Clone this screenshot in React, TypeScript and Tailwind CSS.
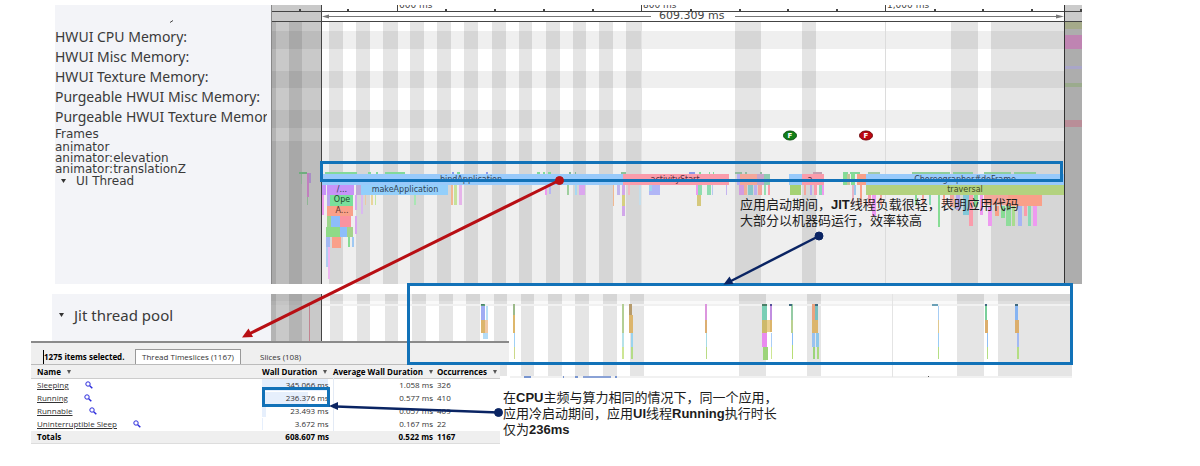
import React from "react";

type Bar = [x: number, y: number, w: number, h: number, fill: string];

const UPPER_STRIPES: [number, number][] = [
  [329, 14], [356, 14], [383, 15], [410, 14], [437, 14], [464, 14], [492, 14], [519, 13],
  [546, 14], [573, 13], [599, 14], [626, 15], [735, 26], [802, 14], [951, 27], [991, 73],
  [289, 13], [271, 5],
];
const LOWER_STRIPES: [number, number][] = [
  [330, 13], [357, 13], [385, 13], [412, 14], [439, 14], [466, 14], [494, 13], [521, 13],
  [548, 14], [575, 14], [603, 14], [630, 14], [739, 27], [807, 14], [957, 27], [998, 74],
  [289, 13], [271, 5],
];
const ROWS: [number, number][] = [[31, 18], [71, 17], [110, 18], [141, 143]];
const MINOR_TICKS = [299, 347, 445, 494, 543, 592, 690, 739, 787, 836, 934, 982, 1031, 1080];
const MAJOR_TICKS: [number, string][] = [[397, "600 ms"], [641, "800 ms"], [885, "1,000 ms"]];

const BLUE = "#98cafb";
const PINK = "#fa9cab";
const GREEN = "#86dc94";
const PURPLE = "#c793f8";
const ORANGE = "#f9a089";
const OLIVE = "#b3d27f";
const MAGENTA = "#ee9af0";

const SLICES: Bar[] = [
  // top level
  [322, 174, 301, 11, BLUE], [623, 174, 106, 11, PINK], [737, 174, 20, 11, "#f4a79b"],
  [757, 174, 7, 11, "#c9a5c9"], [764, 174, 6, 11, "#8fcbb2"], [737, 174, 3, 11, "#b8aef0"],
  [789, 174, 13, 11, BLUE], [802, 174, 22, 11, PINK], [843, 174, 4, 11, GREEN],
  [847, 174, 3, 11, "#c6c39a"], [851, 174, 4, 11, GREEN], [857, 174, 9, 11, ORANGE],
  [866, 174, 198, 11, BLUE],
  // second level
  [321, 185, 5, 10, PURPLE], [327, 185, 27, 10, PURPLE], [356, 185, 5, 10, "#c0a9d8"],
  [361, 185, 87, 10, "#93cffb"], [866, 185, 198, 10, OLIVE],
  [451, 185, 2, 20, "#f1b891"], [454, 185, 3, 20, "#c7e29a"], [459, 185, 3, 20, "#e6b4ea"],
  [371, 195, 2, 10, "#e9d59c"], [375, 195, 1, 10, "#c2e8a0"], [414, 195, 2, 10, "#a9e6b4"],
  [545, 186, 2, 9, MAGENTA], [549, 186, 2, 8, "#b7b5f3"], [567, 185, 2, 10, "#9fcf9f"],
  [575, 185, 2, 10, "#a6d9f2"], [579, 185, 6, 10, "#dba6ee"], [613, 185, 1, 21, "#f1b891"],
  [617, 185, 3, 10, "#c2b5ee"], [622, 185, 3, 31, "#d2a7ea"], [622, 195, 3, 11, "#d6cf80"],
  [628, 185, 2, 10, "#f2b9c3"], [639, 185, 2, 20, "#c4ddea"], [649, 185, 11, 10, "#b1b6f6"],
  [649, 185, 3, 6, "#9fd4ee"], [696, 185, 2, 10, MAGENTA], [698, 185, 4, 10, "#8edcb0"],
  [697, 195, 4, 11, "#d5c87c"], [707, 185, 4, 10, "#8edcb0"], [712, 185, 1, 10, "#b7c8f2"],
  [726, 185, 1, 10, "#c5b4f0"], [739, 185, 5, 10, "#d49ce0"], [744, 185, 3, 10, "#f0b09a"],
  [748, 185, 5, 10, "#86c7c9"], [754, 185, 3, 10, "#bcb1ef"], [758, 185, 4, 10, "#f5a49c"],
  [764, 185, 2, 10, "#95dfb0"], [768, 185, 2, 10, PINK], [790, 185, 11, 10, "#a5d273"],
  [804, 185, 2, 10, "#f4a79b"], [810, 185, 2, 10, "#b7a9ee"], [814, 185, 3, 10, PINK],
  [819, 185, 3, 10, "#8adbb5"], [822, 185, 2, 10, MAGENTA], [852, 185, 2, 20, "#e8b5c6"],
  [854, 185, 2, 10, "#9fc9ed"], [860, 185, 2, 20, ORANGE],
  // nested below makeApplication
  [322, 195, 2, 20, MAGENTA], [328, 195, 2, 21, "#a8cba5"], [330, 195, 23, 11, "#78df9b"],
  [327, 206, 26, 10, ORANGE], [327, 195, 3, 11, "#b4a7ec"], [355, 195, 2, 15, "#d8a7f0"],
  [361, 195, 2, 19, "#d9b9f1"], [365, 195, 1, 10, "#eac8a5"],
  [327, 216, 4, 11, "#9cd68b"], [331, 216, 9, 11, "#8dbdfa"], [340, 216, 11, 11, "#fb93a0"],
  [326, 227, 14, 10, "#8edb87"], [340, 227, 7, 10, "#8dbdfa"], [347, 227, 6, 10, "#a5d38b"],
  [326, 237, 4, 10, "#a3b8f3"], [332, 237, 9, 11, ORANGE], [348, 237, 2, 10, GREEN],
  [352, 237, 2, 10, "#9fc9f3"], [326, 247, 2, 20, "#b1cdf1"], [328, 247, 2, 32, "#edb6ef"],
  [355, 216, 2, 18, "#d8a7f0"],
  // nested below traversal
  [1008, 195, 34, 11, ORANGE], [984, 195, 24, 10, "#f4a79b"],
  [868, 195, 3, 11, PINK], [872, 195, 4, 21, MAGENTA], [880, 195, 2, 10, "#f4a79b"],
  [915, 195, 2, 10, GREEN], [922, 195, 2, 10, "#f4a79b"], [929, 195, 2, 10, "#8adbb5"],
  [938, 195, 2, 32, GREEN], [943, 195, 2, 10, ORANGE], [950, 195, 4, 12, "#f4a79b"],
  [956, 195, 4, 15, "#b7a9ee"], [963, 195, 6, 20, "#83c8d8"], [969, 195, 4, 31, PINK],
  [974, 195, 4, 12, GREEN], [980, 195, 3, 20, MAGENTA], [988, 206, 4, 20, MAGENTA],
  [995, 206, 4, 10, ORANGE], [1001, 206, 4, 12, GREEN], [1006, 206, 5, 20, "#8fdc9b"],
  [1012, 206, 3, 20, "#a9dc8f"], [1018, 206, 4, 20, "#a8b4f4"], [1024, 206, 3, 10, PINK],
  [1028, 206, 3, 20, "#8adbb5"], [1033, 206, 4, 20, MAGENTA],
];

const STATES: Bar[] = [
  [325, 172, 32, 2, "#83d99a"], [368, 172, 3, 2, "#83d99a"], [376, 172, 2, 2, "#83d99a"],
  [385, 172, 20, 2, "#83d99a"], [452, 172, 2, 2, "#8b9bea"], [457, 172, 3, 2, "#83d99a"],
  [486, 172, 2, 2, "#8b9bea"], [537, 172, 3, 2, "#83d99a"], [543, 172, 2, 2, "#83d99a"],
  [548, 172, 3, 2, "#83d99a"], [569, 172, 2, 2, "#83b99a"], [575, 172, 1, 2, "#83b99a"],
  [621, 172, 5, 2, "#8cc39a"], [689, 172, 6, 2, "#8b9bea"], [699, 172, 2, 2, "#83d99a"],
  [709, 172, 1, 2, "#83d99a"], [713, 172, 1, 2, "#83d99a"], [735, 172, 7, 2, "#91bba0"],
  [745, 172, 2, 2, "#91bba0"], [760, 172, 2, 2, "#91bba0"], [813, 172, 9, 2, "#c39fb0"],
  [843, 172, 5, 2, "#83d99a"], [850, 172, 10, 2, "#83d99a"], [868, 172, 12, 2, "#a4c9a8"],
  [912, 172, 38, 2, "#8fce9c"], [953, 172, 20, 2, "#8fce9c"], [984, 172, 27, 2, "#8fce9c"],
  [1014, 172, 22, 2, "#8fce9c"], [299, 172, 8, 2, "#6fae7e"], [301, 174, 1, 10, "#8fb094"],
  [307, 173, 2, 24, "#c07fbd"], [309, 173, 2, 10, "#a98fc6"], [307, 197, 1, 8, "#8fb594"],
];

const EDGE: Bar[] = [
  [1065, 22, 17, 7, "#a5aa8a"], [1065, 35, 17, 14, "#bf84b2"], [1065, 66, 17, 3, "#a9a6c8"],
  [1065, 83, 17, 4, "#9bab8d"], [1065, 120, 17, 7, "#b98e98"],
];

const JIT: Bar[] = [
  [481, 304, 4, 2, "#5ea27d"], [481, 306, 4, 14, "#a0acf3"], [481, 320, 4, 13, "#dcb56c"],
  [485, 320, 3, 13, "#f0c9a6"], [483, 333, 5, 6, "#b4dcf7"], [486, 306, 2, 14, "#b9dff5"],
  [513, 304, 2, 15, "#9cba8a"], [513, 315, 2, 18, "#ddb76b"], [514, 333, 1, 14, "#9fd0f5"], [514, 347, 1, 12, "#cbd989"],
  [622, 304, 2, 29, "#b3cf95"], [622, 333, 2, 14, "#b5e2e8"], [622, 347, 2, 12, "#cde694"],
  [629, 304, 3, 14, "#b69b6c"], [629, 315, 4, 18, "#dcb56c"], [631, 333, 2, 14, "#9ad3ee"], [631, 347, 2, 12, "#b4dc86"],
  [705, 304, 2, 18, "#dc96de"], [705, 320, 2, 13, "#dcae72"], [706, 333, 1, 14, "#a7dbe5"], [706, 347, 1, 12, "#b9db84"],
  [762, 304, 5, 16, "#79cfb5"], [762, 320, 5, 13, "#cdb96b"], [767, 320, 3, 12, "#ead08f"],
  [762, 333, 5, 14, "#e98bef"], [763, 347, 5, 13, "#9cd47a"],
  [770, 304, 2, 16, "#c18ee0"], [770, 320, 2, 12, "#dcb56c"], [771, 333, 1, 14, "#aacdf6"], [771, 347, 1, 12, "#cde694"],
  [791, 304, 2, 16, "#95cba4"], [791, 320, 2, 13, "#b9d191"], [792, 333, 1, 12, "#88bdf5"], [792, 345, 1, 14, "#b7dd75"],
  [812, 304, 3, 16, "#eba37f"], [815, 304, 3, 16, "#79bfbf"], [812, 320, 6, 13, "#dcb56c"],
  [812, 333, 3, 14, "#99c2f0"], [816, 333, 3, 14, "#8dc7ea"], [813, 347, 2, 12, "#9cd47a"], [817, 347, 2, 12, "#a8da7d"],
  [932, 304, 6, 2, "#6aa0b6"], [938, 306, 1, 14, "#a7cdf4"], [938, 320, 1, 13, "#e0c88d"], [938, 333, 1, 14, "#9accf4"], [938, 347, 1, 12, "#b4de84"],
  [985, 304, 2, 18, "#79cf9a"], [985, 320, 3, 13, "#dcae6c"], [987, 333, 1, 14, "#8fbff5"], [987, 347, 1, 12, "#b4de84"],
  [1015, 304, 3, 18, "#86b4f2"], [1015, 320, 4, 13, "#dcae6c"], [1017, 333, 2, 14, "#a1b9f3"], [1017, 347, 2, 12, "#b4de84"],
  [481, 304, 3, 1, "#4b8068"], [762, 304, 5, 2, "#4b8068"], [770, 304, 2, 2, "#55509a"],
  [789, 304, 3, 2, "#406a80"], [815, 304, 3, 2, "#406a80"], [985, 304, 2, 2, "#406a80"], [1015, 304, 3, 2, "#406a80"],
  [524, 376, 7, 2, "#7794cf"], [575, 376, 3, 2, "#7794cf"], [583, 376, 28, 2, "#8aa2d6"], [615, 376, 2, 2, "#7794cf"], [563, 376, 1, 2, "#7794cf"], [928, 376, 1, 1, "#555"],
];

const Bars = ({ items }: { items: Bar[] }) => (
  <>
    {items.map(([x, y, w, h, fill], i) => (
      <rect key={i} x={x} y={y} width={w} height={h} fill={fill} />
    ))}
  </>
);

function MainTrace() {
  return (
    <svg className="block h-full min-w-0 flex-1 bg-white" role="img" aria-label="UI Thread trace" shapeRendering="crispEdges" fontFamily="DejaVu Sans, sans-serif">
      <g transform="translate(-271 -5)">
        {ROWS.map(([y, h]) => <rect key={y} x={271} y={y} width={811} height={h} fill="#efefef" />)}
        {UPPER_STRIPES.map(([x, w]) => <rect key={x} x={x} y={22} width={w} height={262} fill="#000" fillOpacity={0.1} />)}
        <rect x={641} y={22} width={1} height={262} fill="#e3e3e3" />
        <rect x={885} y={22} width={1} height={262} fill="#dcdcdc" />
        <rect x={271} y={5} width={50} height={279} fill="#000" fillOpacity={0.21} />
        <rect x={1065} y={5} width={17} height={17} fill="#cbcbcb" />
        <rect x={1065} y={22} width={17} height={262} fill="#adadad" />
        <Bars items={EDGE} />
        <Bars items={STATES} />
        <Bars items={SLICES} />

        <g fill="#444">
          <rect x={271} y={11} width={811} height={1} />
          <rect x={271} y={21} width={811} height={1} />
          {MINOR_TICKS.map((x) => <rect key={x} x={x} y={9} width={2} height={2} />)}
          {MAJOR_TICKS.map(([x, label]) => (
            <g key={x}>
              <rect x={x} y={5} width={1} height={6} />
              <text x={x + 2} y={8} fontSize={9}>{label}</text>
            </g>
          ))}
        </g>
        <g fill="#777" shapeRendering="auto">
          <rect x={326} y={16} width={325} height={1} />
          <path d="M322 16.5l7-2v4z" />
          <rect x={735} y={16} width={324} height={1} />
          <path d="M1064 16.5l-8-2v4z" />
        </g>
        <text x={659} y={19} fontSize={11} fill="#444">609.309 ms</text>
        <rect x={321} y={5} width={1} height={279} fill="#444" />
        <rect x={1064} y={5} width={1} height={279} fill="#333" />
        <rect x={271} y={5} width={1} height={279} fill="#888" />

        <g fontSize={8} fill="#2f3f55" textAnchor="middle">
          <text x={471} y={182}>bindApplication</text>
          <text x={675} y={182} fill="#5b2a3a">activityStart</text>
          <text x={810} y={182} fill="#5b2a3a">a</text>
          <text x={965} y={182}>Choreographer#doFrame</text>
          <text x={405} y={192}>makeApplication</text>
          <text x={965} y={192} fill="#3c4a22">traversal</text>
          <text x={342} y={192}>/...</text>
          <text x={342} y={202} fill="#1d4a2c">Ope</text>
          <text x={342} y={213} fill="#5b3328">A...</text>
        </g>

        <g shapeRendering="auto" fontSize={7} fontWeight="bold" fill="#fff" textAnchor="middle">
          <ellipse cx={790} cy={135.5} rx={6.5} ry={4.5} fill="#118018" stroke="#0b4d10" />
          <text x={790} y={138}>F</text>
          <ellipse cx={866} cy={135.5} rx={6.5} ry={4.5} fill="#bd0812" stroke="#6d0509" />
          <text x={866} y={138}>F</text>
        </g>
      </g>
    </svg>
  );
}

function JitTrace() {
  return (
    <svg className="block h-full min-w-0 flex-1 bg-white" role="img" aria-label="Jit thread pool trace" shapeRendering="crispEdges">
      <g transform="translate(-271 -294)">
        <rect x={271} y={294} width={801} height={7} fill="#efefef" />
        <rect x={271} y={301} width={801} height={4} fill="#f9f9f9" />
        {LOWER_STRIPES.map(([x, w]) => <rect key={x} x={x} y={294} width={w} height={82} fill="#000" fillOpacity={0.1} />)}
        <rect x={321} y={304} width={751} height={2} fill="#f1f1f1" />
        <rect x={510} y={376} width={562} height={2} fill="#f1f1f1" />
        <rect x={892} y={294} width={1} height={83} fill="#e4e4e4" />
        <rect x={271} y={294} width={50} height={84} fill="#000" fillOpacity={0.21} />
        <rect x={309} y={305} width={1} height={40} fill="#c28490" />
        <rect x={321} y={294} width={1} height={50} fill="#444" />
        <Bars items={JIT} />
      </g>
    </svg>
  );
}

const Magnifier = () => (
  <svg width="8" height="8" viewBox="0 0 8 8" fill="none" stroke="#2b2bdc" aria-hidden="true">
    <circle cx="3" cy="3" r="2.2" />
    <path d="M4.7 4.7L7.3 7.3" strokeWidth="1.5" />
  </svg>
);

const TIMESLICES = [
  { name: "Sleeping", wall: "345.066 ms", avg: "1.058 ms", count: "326", share: 98 },
  { name: "Running", wall: "236.376 ms", avg: "0.577 ms", count: "410", share: 68 },
  { name: "Runnable", wall: "23.493 ms", avg: "0.057 ms", count: "409", share: 6 },
  { name: "Uninterruptible Sleep", wall: "3.672 ms", avg: "0.167 ms", count: "22", share: 1 },
];

const SortMark = () => (
  <svg width="4" height="4" viewBox="0 0 4 4" className="shrink-0" aria-hidden="true"><path d="M0 0h4L2 4z" fill="#555" /></svg>
);

function SelectionPanel() {
  return (
    <section className="relative -mt-[37px] ml-[31px] w-[478px] font-['Open_Sans',sans-serif] text-[8px] text-[#333]">
      <div className="flex h-[23px] items-end border-t-2 border-[#8a8a8a] bg-[#efefef] pl-3 leading-[14px]">
        <strong className="w-[92px] whitespace-nowrap border-l border-black text-black">1275 items selected.</strong>
        <button className="w-[106px] whitespace-nowrap border border-b-0 border-[#999] bg-white">Thread Timeslices (1167)</button>
        <button className="ml-[19px] whitespace-nowrap">Slices (108)</button>
      </div>
      <table className="w-[469px] table-fixed border-collapse bg-white">
        <colgroup>
          <col className="w-[231px]" /><col className="w-[71px]" /><col className="w-[102px]" /><col />
        </colgroup>
        <thead className="border-t border-[#bbb] bg-[#f0f0f0] text-black">
          <tr className="h-3.5 whitespace-nowrap border-b border-[#ccc] leading-3">
            <th className="p-0 pl-1.5"><div className="flex items-center gap-1.5">Name <SortMark /></div></th>
            <th className="p-0"><div className="flex items-center gap-1.5">Wall Duration <SortMark /></div></th>
            <th className="p-0"><div className="flex items-center gap-1.5">Average Wall Duration <SortMark /></div></th>
            <th className="p-0 pl-0.5"><div className="flex items-center gap-1.5">Occurrences <SortMark /></div></th>
          </tr>
        </thead>
        <tbody>
          {TIMESLICES.map((r) => (
            <tr key={r.name} className="h-[13px] leading-3">
              <td className="p-0 pl-1.5"><div className="flex items-center gap-4"><a href="#" className="underline">{r.name}</a><Magnifier /></div></td>
              <td className="p-0">
                <div className="mr-1 text-right" style={{ background: `linear-gradient(to right, #e6effc ${r.share}%, transparent ${r.share}%)` }}>{r.wall}</div>
              </td>
              <td className="border-l border-[#e3eaf5] p-0 pr-0.5 text-right">{r.avg}</td>
              <td className="p-0 pl-0.5">{r.count}</td>
            </tr>
          ))}
        </tbody>
        <tfoot>
          <tr className="h-[13px] border-b border-[#ddd] bg-[#efefef] font-bold leading-3 text-black">
            <td className="p-0 pl-1.5">Totals</td>
            <td className="p-0 pr-1 text-right">608.607 ms</td>
            <td className="p-0 pr-0.5 text-right">0.522 ms</td>
            <td className="p-0 pl-0.5">1167</td>
          </tr>
        </tfoot>
      </table>
    </section>
  );
}

function Callouts() {
  return (
    <>
      <svg className="pointer-events-none absolute inset-0 h-full w-full" aria-hidden="true">
        <g fill="none" stroke="#1272b8" strokeWidth="3">
          <rect x="321.5" y="162.5" width="740" height="18" />
          <rect x="408.5" y="284.5" width="663" height="79" />
          <rect x="263.5" y="388.5" width="65" height="17" />
        </g>
        <g fill="#b80f14" stroke="#b80f14">
          <path d="M559 180.5L250 333.5" strokeWidth="3" />
          <circle cx="559.5" cy="180.5" r="4" />
          <path d="M242 337.5l11-0.500-4.500-8.500z" strokeWidth="0" />
        </g>
        <g fill="#0a2463" stroke="#0a2463">
          <path d="M819 236L730 281.500" strokeWidth="2.500" />
          <circle cx="819" cy="236" r="4" />
          <path d="M723.500 284.500l10-0.500-4-7.500z" strokeWidth="0" />
          <path d="M498.500 412.500L336 406.500" strokeWidth="2.500" />
          <circle cx="498.500" cy="412.500" r="4" />
          <path d="M329 406l9-4v8z" strokeWidth="0" />
        </g>
      </svg>
      <p className="absolute left-[740px] top-[197px] whitespace-nowrap">
        应用启动期间，<b>JIT</b>线程负载很轻，表明应用代码<br />大部分以机器码运行，效率较高
      </p>
      <p className="absolute left-[503px] top-[390px] whitespace-nowrap">
        在<b>CPU</b>主频与算力相同的情况下，同一个应用，<br />应用冷启动期间，应用<b>UI</b>线程<b>Running</b>执行时长<br />仅为<b>236ms</b>
      </p>
    </>
  );
}

const MEMORY_TRACKS = ["HWUI CPU Memory:", "HWUI Misc Memory:", "HWUI Texture Memory:", "Purgeable HWUI Misc Memory:", "Purgeable HWUI Texture Memory:"];
const ANIMATOR_TRACKS = ["animator", "animator:elevation", "animator:translationZ"];

const Caret = () => (
  <svg width="5" height="4" viewBox="0 0 5 4" aria-hidden="true"><path d="M0 0h5L2.500 4z" fill="#333" /></svg>
);

export default function App() {
  return (
    <main className="relative overflow-hidden bg-white pb-[22px] pt-[5px] font-['Liberation_Sans','Noto_Sans_CJK_SC',sans-serif] text-[13px] leading-4 text-[#1c1c1c]">
      <section className="ml-[55px] mr-[118px] flex h-[279px]">
        <aside className="w-[216px] shrink-0 bg-[#f3f4f8] pr-1 font-['DejaVu_Sans',sans-serif] text-[12px] text-[#3a3a3a]">
          <div className="flex h-[22px] items-end pb-1 pl-[114px]">
            <svg width="5" height="3" viewBox="0 0 5 3" aria-hidden="true"><path d="M1 2.500L4 0.500" stroke="#444" /></svg>
          </div>
          {MEMORY_TRACKS.map((t) => <div key={t} className="overflow-hidden whitespace-nowrap font-['Noto_Sans',sans-serif] text-[14px] leading-5">{t}</div>)}
          <div className="leading-[15px]">Frames</div>
          {ANIMATOR_TRACKS.map((t) => <div key={t} className="leading-[11px]">{t}</div>)}
          <button className="flex items-center gap-2.5 pl-1.5 leading-3"><Caret />UI Thread</button>
        </aside>
        <MainTrace />
      </section>
      <section className="ml-[52px] mr-[128px] mt-2.5 flex h-[84px]">
        <aside className="h-12 w-[219px] shrink-0 bg-[#f3f4f8] pt-3 font-['Noto_Sans',sans-serif] text-[15px] text-[#3a3a3a]">
          <button className="flex items-center gap-2.5 pl-[7px] leading-[18px]"><Caret />Jit thread pool</button>
        </aside>
        <JitTrace />
      </section>
      <SelectionPanel />
      <Callouts />
    </main>
  );
}
